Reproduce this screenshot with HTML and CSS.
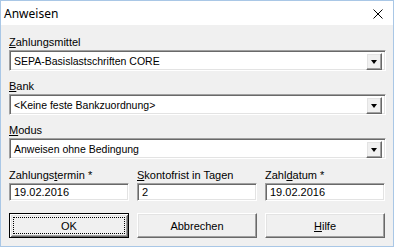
FILE: index.html
```html
<!DOCTYPE html>
<html lang="de">
<head>
    <meta charset="UTF-8">
    <title>Anweisen</title>
    <link rel="stylesheet" href="styles.css">
</head>
<body>
    <div class="window">
        <div class="titlebar">
            <span class="title">Anweisen</span>
            <span class="close">
                <svg width="10" height="10" viewBox="0 0 10 10">
                    <path d="M0.5 0.5 L9.5 9.5 M9.5 0.5 L0.5 9.5" stroke="#000" stroke-width="1" fill="none"/>
                </svg>
            </span>
        </div>

        <div class="content">
            <div class="field">
                <div class="label"><u>Z</u>ahlungsmittel</div>
                <div class="combo">
                    <span class="combo-text">SEPA-Basislastschriften CORE</span>
                    <span class="combo-btn"><span class="arrow"></span></span>
                </div>
            </div>

            <div class="field">
                <div class="label"><u>B</u>ank</div>
                <div class="combo">
                    <span class="combo-text">&lt;Keine feste Bankzuordnung&gt;</span>
                    <span class="combo-btn"><span class="arrow"></span></span>
                </div>
            </div>

            <div class="field last">
                <div class="label"><u>M</u>odus</div>
                <div class="combo">
                    <span class="combo-text">Anweisen ohne Bedingung</span>
                    <span class="combo-btn"><span class="arrow"></span></span>
                </div>
            </div>

            <div class="row">
                <div class="cell">
                    <div class="label">Zahlungs<u>t</u>ermin *</div>
                    <div class="input">19.02.2016</div>
                </div>
                <div class="cell">
                    <div class="label"><u>S</u>kontofrist in Tagen</div>
                    <div class="input">2</div>
                </div>
                <div class="cell">
                    <div class="label">Zahl<u>d</u>atum *</div>
                    <div class="input">19.02.2016</div>
                </div>
            </div>

            <div class="row buttons">
                <div class="btn default"><span class="focus">OK</span></div>
                <div class="btn">Abbrechen</div>
                <div class="btn"><u>H</u>ilfe</div>
            </div>
        </div>
    </div>
</body>
</html>
```

FILE: styles.css
```css
* {
    margin: 0;
    padding: 0;
    box-sizing: border-box;
}

body {
    font-family: 'Liberation Sans', Arial, sans-serif;
    font-size: 11px;
    color: #000;
    background-color: #fff;
}

.window {
    width: 394px;
    height: 247px;
    border: 1px solid #a9c7e6;
    background-color: #f0f0f0;
}

.titlebar {
    height: 24px;
    background-color: #fff;
    display: flex;
    align-items: center;
    justify-content: space-between;
    padding: 0 10px 0 3px;
}

.title {
    font-family: 'Noto Sans', sans-serif;
    font-size: 12px;
}

.close {
    display: flex;
    margin-top: 1px;
}

.content {
    padding: 11px 7px 0 8px;
}

.label {
    line-height: 13px;
    height: 13px;
    margin-bottom: 1px;
    white-space: nowrap;
}

.field {
    margin-bottom: 9px;
}

.field.last {
    margin-bottom: 10px;
}

/* versenkter Rahmen wie bei Windows */
.combo,
.input {
    background-color: #fff;
    border: 1px solid;
    border-color: #a0a0a0 #fff #fff #a0a0a0;
    box-shadow: inset 1px 1px 0 #696969, inset -1px -1px 0 #e3e3e3;
}

.combo {
    height: 21px;
    display: flex;
    align-items: center;
    padding: 2px 3px 2px 4px;
}

.combo-text {
    flex: 1;
    font-size: 10.5px;
}

.combo-btn {
    width: 16px;
    height: 17px;
    margin-top: 1px;
    display: flex;
    align-items: center;
    justify-content: center;
    background-color: #f0f0f0;
    border: 1px solid;
    border-color: #fff #696969 #696969 #fff;
    box-shadow: inset -1px -1px 0 #a0a0a0, inset 1px 1px 0 #e3e3e3;
}

.arrow {
    width: 0;
    height: 0;
    border-left: 3.5px solid transparent;
    border-right: 3.5px solid transparent;
    border-top: 4px solid #000;
    margin-top: 1px;
}

.row {
    display: grid;
    grid-template-columns: repeat(3, 120px);
    column-gap: 8px;
}

.input {
    height: 18px;
    line-height: 14px;
    padding: 1px 4px;
}

.buttons {
    margin-top: 12px;
}

.btn {
    height: 25px;
    display: flex;
    align-items: center;
    justify-content: center;
    background-color: #f0f0f0;
    border: 1px solid;
    border-color: #fff #696969 #696969 #fff;
    box-shadow: inset -1px -1px 0 #a0a0a0, inset 1px 1px 0 #e3e3e3;
}

.btn.default {
    border-color: #000;
    box-shadow: inset 1px 1px 0 #fff, inset -1px -1px 0 #696969,
                inset 2px 2px 0 #e3e3e3, inset -2px -2px 0 #a0a0a0;
    padding: 3px;
}

.focus {
    flex: 1;
    align-self: stretch;
    display: flex;
    align-items: center;
    justify-content: center;
    border: 1px dotted #000;
}
```
